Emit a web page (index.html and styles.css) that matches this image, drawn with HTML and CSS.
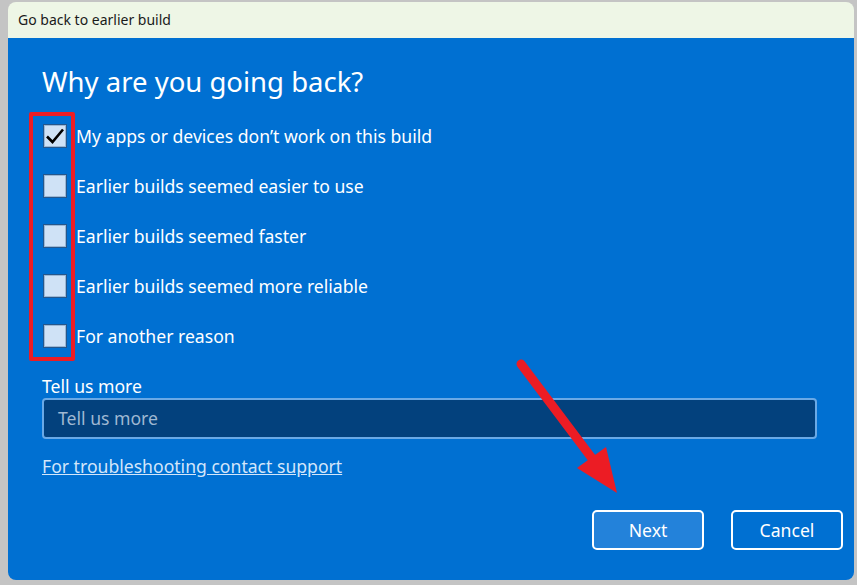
FILE: index.html
```html
<!DOCTYPE html>
<html>

<head>
    <link rel="stylesheet" href="styles.css">
</head>

<body>

    <div class="window">
        <div class="titlebar">Go back to earlier build</div>

        <div class="content">
            <h1>Why are you going back?</h1>

            <div class="reasons">
                <label class="reason"><span class="box checked">
                    <svg width="20" height="20" viewBox="0 0 20 20"><path d="M2 10.5 L7.5 16 L18 3.5" fill="none" stroke="#000" stroke-width="2.6"/></svg>
                </span>My apps or devices don’t work on this build</label>
                <label class="reason"><span class="box"></span>Earlier builds seemed easier to use</label>
                <label class="reason"><span class="box"></span>Earlier builds seemed faster</label>
                <label class="reason"><span class="box"></span>Earlier builds seemed more reliable</label>
                <label class="reason"><span class="box"></span>For another reason</label>
                <div class="highlight"></div>
            </div>

            <div class="more-label">Tell us more</div>
            <div class="more-input">Tell us more</div>

            <a class="support" href="#">For troubleshooting contact support</a>

            <div class="buttons">
                <button class="btn primary">Next</button>
                <button class="btn">Cancel</button>
            </div>

            <!-- annotation arrow -->
            <svg class="arrow" width="120" height="150" viewBox="0 0 120 150">
                <line x1="11" y1="11" x2="84" y2="108" stroke="#ec1c24" stroke-width="9" stroke-linecap="round"/>
                <polygon points="67,115 96,94 107,140" fill="#ec1c24"/>
            </svg>
        </div>
    </div>

</body>

</html>
```

FILE: styles.css
```css
body {
    margin: 0;
    background-color: #c4c4c4;
    font-family: "Noto Sans", "Liberation Sans", sans-serif;
}

.window {
    margin: 2px 0 0 8px;
    width: 846px;
    height: 578px;
    border-radius: 8px;
    overflow: hidden;
    display: flex;
    flex-direction: column;
}

.titlebar {
    height: 36px;
    background-color: #eef6e6;
    color: #1a1a1a;
    font-size: 14px;
    line-height: 36px;
    padding-left: 10px;
}

.content {
    flex: 1;
    background-color: #0070d2;
    color: #fff;
    padding: 26px 0 0 34px;
    position: relative;
}

h1 {
    margin: 0;
    font-weight: normal;
    font-size: 27.5px;
    line-height: 36px;
}

.reasons {
    margin-top: 11px;
    position: relative;
}

.reason {
    display: flex;
    align-items: center;
    height: 50px;
    font-size: 17.6px;
}

.box {
    width: 22px;
    height: 22px;
    margin-left: 1px;
    margin-right: 9px;
    background-color: #cfe2f6;
    border: 1px solid #25578c;
    box-shadow: inset 0 0 0 1px #9db8d4;
    display: flex;
    align-items: center;
    justify-content: center;
}

.highlight {
    position: absolute;
    left: -13px;
    top: 1px;
    width: 38px;
    height: 241px;
    border: 4px solid #ec1c24;
    border-radius: 2px;
}

.more-label {
    margin-top: 13px;
    font-size: 17.6px;
    line-height: 24px;
}

.more-input {
    width: 757px;
    height: 37px;
    background-color: #03417d;
    border: 2px solid #6aa9e6;
    border-radius: 4px;
    color: #9fb8d2;
    font-size: 17.6px;
    line-height: 37px;
    padding-left: 14px;
}

.support {
    display: inline-block;
    margin-top: 15px;
    color: #d4e6fa;
    font-size: 17.6px;
    line-height: 24px;
}

.buttons {
    display: flex;
    justify-content: flex-end;
    gap: 27px;
    margin-top: 32px;
    margin-right: 11px;
}

.btn {
    width: 112px;
    height: 40px;
    background-color: #0070d2;
    border: 2px solid #fff;
    border-radius: 5px;
    color: #fff;
    font-family: inherit;
    font-size: 17.6px;
}

.btn.primary {
    background-color: #2382da;
}

.arrow {
    position: absolute;
    left: 502px;
    top: 315px;
}
```
